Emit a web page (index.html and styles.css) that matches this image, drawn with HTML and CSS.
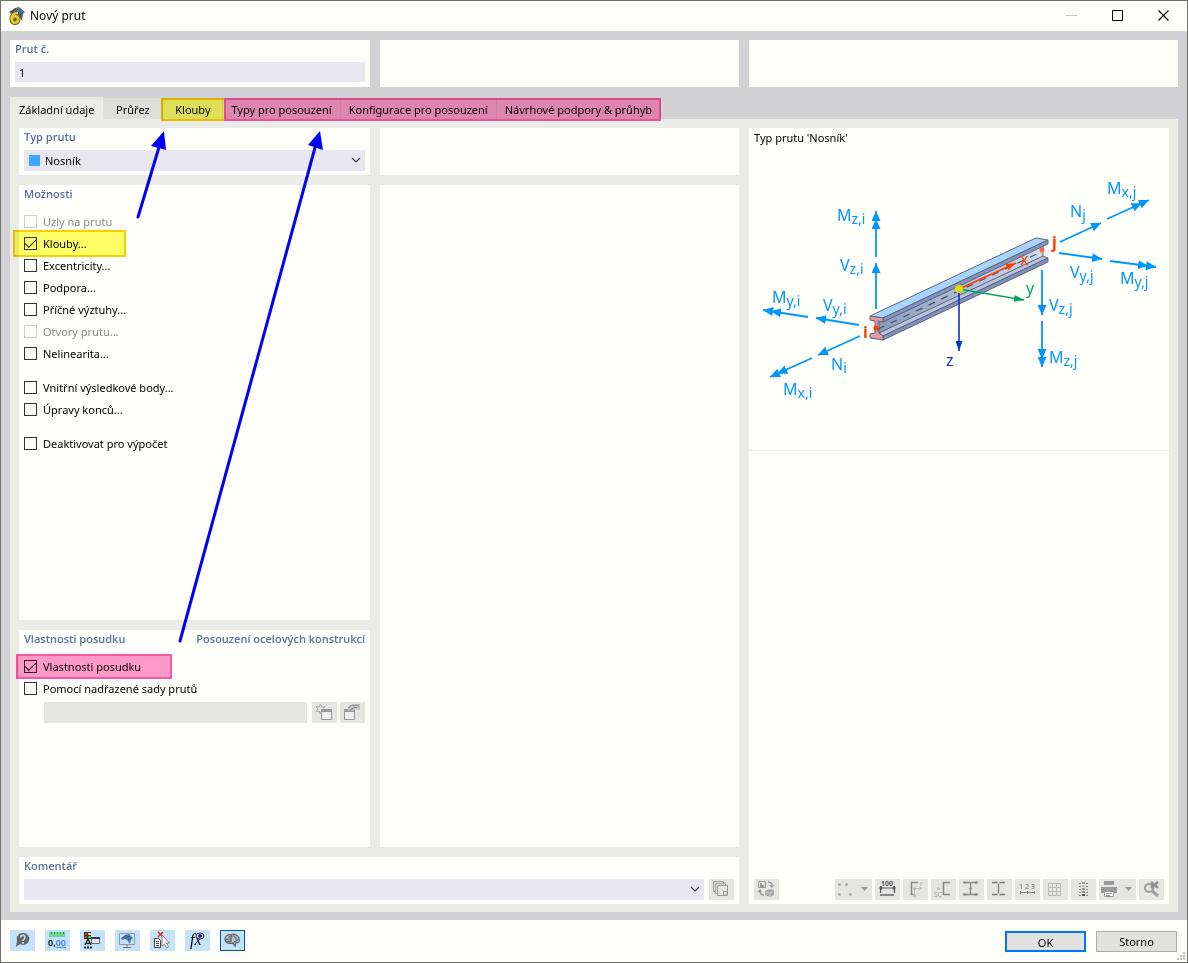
FILE: index.html
```html
<!DOCTYPE html>
<html lang="cs">
<head>
    <meta charset="UTF-8">
    <meta name="viewport" content="width=device-width, initial-scale=1.0">
    <title>Nový prut</title>
    <link rel="stylesheet" href="styles.css">
</head>
<body>
    <div class="dialog">
        <header class="titlebar">
            <svg class="app-icon" width="17" height="18" viewBox="0 0 17 18">
                <path d="M0 5l6-4 4-1 6 5-2 2-1 7-3-5-4-4-4 2z" fill="#56606e"/>
                <path d="M5 3l4-2 6 4-2 2-4-3-3 1z" fill="#4a86d0"/>
                <path d="M2 5l5-3M5 6l4-4M9 6l4-3M11 8l3-3" stroke="#3b4656" fill="none"/>
                <path d="M9 6C5.500 6 2.500 8 2.500 12" stroke="#6b6520" stroke-width="4" fill="none"/>
                <circle cx="6" cy="12.500" r="3.500" stroke="#6b6520" stroke-width="4" fill="none"/>
                <path d="M9 6C5.500 6 2.500 8 2.500 12" stroke="#e8cf2a" stroke-width="2.500" fill="none"/>
                <circle cx="6" cy="12.500" r="3.200" stroke="#e8cf2a" stroke-width="2.500" fill="#6b6520"/>
            </svg>
            <h1>Nový prut</h1>
            <div class="window-buttons">
                <button aria-label="Minimalizovat"><svg width="11" height="11" viewBox="0 0 11 11"><path d="M0 5.500h11" stroke="#c4c4c4"/></svg></button>
                <button aria-label="Maximalizovat"><svg width="11" height="11" viewBox="0 0 11 11"><path d="M.5 .5h10v10H.5z" stroke="#000" fill="none"/></svg></button>
                <button aria-label="Zavřít"><svg width="11" height="11" viewBox="0 0 11 11"><path d="M.5 .5l10 10M10.500 .5l-10 10" stroke="#000" stroke-width="1.200"/></svg></button>
            </div>
        </header>

        <main>
            <div class="top-row">
                <section class="panel">
                    <h2><label for="member-no">Prut č.</label></h2>
                    <input type="text" id="member-no" class="field" value="1">
                </section>
                <section class="panel"></section>
                <section class="panel"></section>
            </div>

            <nav class="tabs">
                <button class="tab active">Základní údaje</button>
                <button class="tab">Průřez</button>
                <button class="tab">Klouby</button>
                <button class="tab">Typy pro posouzení</button>
                <button class="tab">Konfigurace pro posouzení</button>
                <button class="tab">Návrhové podpory &amp; průhyb</button>
            </nav>

            <div class="page">
                <section class="panel area-type">
                    <h2><label for="member-type">Typ prutu</label></h2>
                    <div class="select-box with-color">
                        <span class="swatch"></span>
                        <select id="member-type"><option>Nosník</option></select>
                        <svg class="chevron" width="10" height="6" viewBox="0 0 10 6"><path d="M1 1l4 4 4-4" stroke="#444" stroke-width="1.200" fill="none"/></svg>
                    </div>
                </section>

                <section class="panel area-empty"></section>

                <section class="panel area-options">
                    <h2>Možnosti</h2>
                    <div class="checks">
                        <label class="check disabled"><input type="checkbox" disabled>Uzly na prutu</label>
                        <label class="check"><input type="checkbox" checked>Klouby...</label>
                        <label class="check"><input type="checkbox">Excentricity...</label>
                        <label class="check"><input type="checkbox">Podpora...</label>
                        <label class="check"><input type="checkbox">Příčné výztuhy...</label>
                        <label class="check disabled"><input type="checkbox" disabled>Otvory prutu...</label>
                        <label class="check"><input type="checkbox">Nelinearita...</label>
                        <label class="check new-group"><input type="checkbox">Vnitřní výsledkové body...</label>
                        <label class="check"><input type="checkbox">Úpravy konců...</label>
                        <label class="check new-group"><input type="checkbox">Deaktivovat pro výpočet</label>
                    </div>
                </section>

                <section class="panel area-middle"></section>

                <section class="panel area-design">
                    <h2>Vlastnosti posudku <span>Posouzení ocelových konstrukcí</span></h2>
                    <div class="checks">
                        <label class="check"><input type="checkbox" checked>Vlastnosti posudku</label>
                        <label class="check"><input type="checkbox">Pomocí nadřazené sady prutů</label>
                    </div>
                    <div class="set-row">
                        <input type="text" class="field" aria-label="Sada prutů" disabled>
                        <button class="icon-btn" aria-label="Nová sada prutů">
                            <svg viewBox="0 0 25 21">
                                <path d="M8.500 2l1.200 3 3.300-.5-2 2.500 2 2.500-3.300-.5-1.200 3-1.200-3-3.300.5 2-2.500-2-2.500 3.300.5z" stroke="#aaa" fill="#e5e5e4"/>
                                <path d="M9.500 7.500h10v10h-10z" fill="#eee" stroke="#999"/>
                                <path d="M9 7h11v3H9z" fill="#999"/>
                            </svg>
                        </button>
                        <button class="icon-btn" aria-label="Upravit sadu prutů">
                            <svg viewBox="0 0 25 21">
                                <path d="M4.500 7.500h10v10h-10z" fill="#eee" stroke="#999"/>
                                <path d="M4 7h11v3H4z" fill="#999"/>
                                <path d="M7 7l3-4 4-1h6v6l-3-1-4 2-2-1-3 1z" fill="#c0c0c0"/>
                                <path d="M8 6l4-3 3 1M10 8l4-2M15 3l4 1M14 5l3 1" stroke="#8c8c8c" fill="none"/>
                            </svg>
                        </button>
                    </div>
                </section>

                <section class="panel area-comment">
                    <h2><label for="comment">Komentář</label></h2>
                    <div class="comment-row">
                        <div class="select-box">
                            <select id="comment"><option></option></select>
                            <svg class="chevron" width="10" height="6" viewBox="0 0 10 6"><path d="M1 1l4 4 4-4" stroke="#444" stroke-width="1.200" fill="none"/></svg>
                        </div>
                        <button class="icon-btn" aria-label="Převzít komentář">
                            <svg viewBox="0 0 25 21">
                                <path d="M6.500 12.500h-2v-10h10v2M8.500 14.500h-2v-10h10v2" stroke="#999" fill="none"/>
                                <path d="M8.500 6.500h10v10h-10zM14.500 16.500v-4h4" fill="none" stroke="#999"/>
                                <path d="M15 16l3-3v3z" fill="#ccc"/>
                            </svg>
                        </button>
                    </div>
                </section>

                <aside class="panel area-info">
                    <p>Typ prutu 'Nosník'</p>
                    <svg class="diagram" viewBox="0 0 420 292" role="img" aria-label="Nosník">
                        <defs>
                            <linearGradient id="web" x1="0" y1="1" x2="1" y2="0">
                                <stop offset="0" stop-color="#8799ba"/>
                                <stop offset=".6" stop-color="#b3c5dc"/>
                                <stop offset="1" stop-color="#d2dfea"/>
                            </linearGradient>
                            <marker id="head" viewBox="0 0 10 9" refX="10" refY="4.500" markerWidth="10" markerHeight="9" markerUnits="userSpaceOnUse" orient="auto"><path d="M0 0l10 4.500L0 9z" fill="#0096ff"/></marker>
                            <marker id="head2" viewBox="0 0 18 9" refX="18" refY="4.500" markerWidth="18" markerHeight="9" markerUnits="userSpaceOnUse" orient="auto"><path d="M0 0l8 3.600V0l10 4.500L8 9V5.400L0 9z" fill="#0096ff"/></marker>
                            <marker id="head-x" viewBox="0 0 10 7" refX="10" refY="3.500" markerWidth="10" markerHeight="7" markerUnits="userSpaceOnUse" orient="auto"><path d="M0 0l10 3.500L0 7z" fill="#ff3c00"/></marker>
                            <marker id="head-y" viewBox="0 0 10 7" refX="10" refY="3.500" markerWidth="10" markerHeight="7" markerUnits="userSpaceOnUse" orient="auto"><path d="M0 0l10 3.500L0 7z" fill="#00a265"/></marker>
                            <marker id="head-z" viewBox="0 0 10 7" refX="10" refY="3.500" markerWidth="10" markerHeight="7" markerUnits="userSpaceOnUse" orient="auto"><path d="M0 0l10 3.500L0 7z" fill="#1032c8"/></marker>
                        </defs>

                        <!-- beam -->
                        <g stroke="#60647c" stroke-width="1" stroke-linejoin="round">
                            <path d="M130 164L294 86V100L130 176z" fill="url(#web)"/>
                            <path d="M130 175L294 98l5 2L134 178z" fill="#b5c4da"/>
                            <path d="M134 178L299 100v4L134 182z" fill="#7f92bb"/>
                            <path d="M121 158L287 80l12 2L134 160z" fill="#a6d4fb"/>
                            <path d="M134 160L299 82v4L134 164z" fill="#8294be"/>
                            <path d="M121 158l13 2v4l-5-1v11l5 4v4l-13-2v-4l5-1v-12l-5-1z" fill="#e39a9e"/>
                        </g>
                        <path d="M129 171L290 95" stroke="#4c5260" stroke-width="1.200" stroke-dasharray="7 7"/>
                        <circle cx="127" cy="170" r="2.500" fill="#ff3c00"/>
                        <circle cx="293" cy="92" r="2.500" fill="#ff6a40"/>

                        <!-- forces and moments -->
                        <g stroke="#0096ff" stroke-width="1.800">
                            <path d="M127 151V105" marker-end="url(#head)"/>
                            <path d="M110 167L67 160" marker-end="url(#head)"/>
                            <path d="M111 178L69 197" marker-end="url(#head)"/>
                            <path d="M311 84L352 65" marker-end="url(#head)"/>
                            <path d="M310 95L353 101" marker-end="url(#head)"/>
                            <path d="M293 112V157" marker-end="url(#head)"/>
                            <path d="M127 99V53" marker-end="url(#head2)"/>
                            <path d="M59 159L14 152" marker-end="url(#head2)"/>
                            <path d="M63 200L21 219" marker-end="url(#head2)"/>
                            <path d="M358 61L400 42" marker-end="url(#head2)"/>
                            <path d="M361 103L407 109" marker-end="url(#head2)"/>
                            <path d="M293 163V209" marker-end="url(#head2)"/>
                        </g>

                        <!-- local axes -->
                        <g stroke-width="1.600">
                            <path d="M210 131L267 105" stroke="#ff3c00" marker-end="url(#head-x)"/>
                            <path d="M210 131L275 142" stroke="#00a265" marker-end="url(#head-y)"/>
                            <path d="M210 131V193" stroke="#1032c8" marker-end="url(#head-z)"/>
                        </g>
                        <circle cx="210" cy="131" r="4" fill="#e0dc00"/>

                        <g class="force">
                            <text x="88" y="63">M<tspan class="sub" dy="3">z,i</tspan></text>
                            <text x="91" y="113">V<tspan class="sub" dy="3">z,i</tspan></text>
                            <text x="23" y="145">M<tspan class="sub" dy="3">y,i</tspan></text>
                            <text x="74" y="153">V<tspan class="sub" dy="3">y,i</tspan></text>
                            <text x="82" y="212">N<tspan class="sub" dy="3">i</tspan></text>
                            <text x="34" y="237">M<tspan class="sub" dy="3">x,i</tspan></text>
                            <text x="321" y="59">N<tspan class="sub" dy="3">j</tspan></text>
                            <text x="358" y="36">M<tspan class="sub" dy="3">x,j</tspan></text>
                            <text x="321" y="120">V<tspan class="sub" dy="3">y,j</tspan></text>
                            <text x="371" y="126">M<tspan class="sub" dy="3">y,j</tspan></text>
                            <text x="300" y="153">V<tspan class="sub" dy="3">z,j</tspan></text>
                            <text x="300" y="205">M<tspan class="sub" dy="3">z,j</tspan></text>
                        </g>
                        <g class="node">
                            <text x="114" y="180">i</text>
                            <text x="303" y="90">j</text>
                        </g>
                        <g class="axis">
                            <text x="271" y="107" fill="#ff3c00">x</text>
                            <text x="277" y="136" fill="#00a265">y</text>
                            <text x="197" y="208" fill="#1032c8">z</text>
                        </g>
                    </svg>
                    <div class="view-tools">
                        <button class="icon-btn first" aria-label="Přepnout zobrazení">
                            <svg viewBox="0 0 25 21">
                                <path d="M4.500 2.500h7v6h-7z" fill="none" stroke="#999"/>
                                <path d="M6 4h2v2h2v2H6z" fill="#999"/>
                                <path d="M14 3c4 0 4 2 4 4" stroke="#999" stroke-width="1.500" fill="none"/>
                                <path d="M15 6h5l-2 3z" fill="#999"/>
                                <path d="M6 12c0 3 1 4 4 4" stroke="#999" stroke-width="1.500" fill="none"/>
                                <path d="M3 13h5L6 10z" fill="#999"/>
                                <path d="M11 12l5-2 4 1v5l-4 2-5-2z" fill="#a5a5a5"/>
                                <path d="M11 13l5 1 4-2M16 14v4" stroke="#ccc" fill="none"/>
                            </svg>
                        </button>
                        <button class="icon-btn wide" aria-label="Body">
                            <svg viewBox="0 0 37 21">
                                <g fill="#aaa"><circle cx="4.500" cy="5.500" r="1.500"/><circle cx="11.500" cy="5.500" r="1.500"/><circle cx="4.500" cy="15.500" r="1.500"/><circle cx="15.500" cy="15.500" r="1.500"/></g>
                                <path d="M26 8h7l-3.500 4z" fill="#999"/>
                            </svg>
                        </button>
                        <button class="icon-btn" aria-label="Kóty">
                            <svg viewBox="0 0 25 21">
                                <text x="12" y="7" text-anchor="middle" class="tiny dark">100</text>
                                <path d="M5 9h15M5.500 7v7M19.500 7v7" stroke="#555" stroke-width="1.200"/>
                                <path d="M4 9l3-2v4zM21 9l-3-2v4z" fill="#555"/>
                                <path d="M5 15h14v2H5z" fill="#888"/>
                            </svg>
                        </button>
                        <button class="icon-btn" aria-label="Osy průřezu">
                            <svg viewBox="0 0 25 21">
                                <path d="M15 3.500H8.500v12H12" stroke="#888" stroke-width="1.500" fill="none"/>
                                <path d="M10 9.500h8M11.500 9v8M16 8l3 1.500-3 1.500M10 15l1.500 3 1.500-3" stroke="#bbb" fill="none"/>
                                <circle cx="11.500" cy="9.500" r="1.500" fill="#bbb"/>
                                <path d="M17 3l1.500 2L20 3M18.500 5L17 7" stroke="#bbb" fill="none"/>
                            </svg>
                        </button>
                        <button class="icon-btn" aria-label="Střed smyku">
                            <svg viewBox="0 0 25 21">
                                <path d="M19 3.500h-6.500v12H19" stroke="#888" stroke-width="1.500" fill="none"/>
                                <circle cx="7.500" cy="9.500" r="1.500" fill="#bbb"/>
                                <text x="3" y="18" class="tiny light">SC</text>
                            </svg>
                        </button>
                        <button class="icon-btn" aria-label="Obrys průřezu">
                            <svg viewBox="0 0 25 21">
                                <path d="M4 3.500h15M4 15.500h15M11.500 3.500v12" stroke="#888" stroke-width="1.300"/>
                                <g fill="#888"><circle cx="6" cy="3.500" r="1.200"/><circle cx="17" cy="3.500" r="1.200"/><circle cx="6" cy="15.500" r="1.200"/><circle cx="17" cy="15.500" r="1.200"/><circle cx="11.500" cy="9.500" r="1.200"/></g>
                            </svg>
                        </button>
                        <button class="icon-btn" aria-label="Části průřezu">
                            <svg viewBox="0 0 25 21">
                                <path d="M5 3.500h5.500M12.500 3.500H18M5 15.500h5.500M12.500 15.500H18M11.500 4.500v10" stroke="#777" stroke-width="1.300"/>
                            </svg>
                        </button>
                        <button class="icon-btn" aria-label="Číslování">
                            <svg viewBox="0 0 25 21">
                                <text x="4" y="10" class="tiny">1</text>
                                <text x="10" y="10" class="tiny">2</text>
                                <text x="16" y="10" class="tiny">3</text>
                                <path d="M5 13.500h15M5.500 12v3M12.500 12v3M19.500 12v3" stroke="#888"/>
                            </svg>
                        </button>
                        <button class="icon-btn" aria-label="Mřížka">
                            <svg viewBox="0 0 25 21"><path d="M5.500 4.500h12v12h-12zM9.500 4.500v12M13.500 4.500v12M5.500 8.500h12M5.500 12.500h12" stroke="#bbb" fill="none"/></svg>
                        </button>
                        <button class="icon-btn" aria-label="Rozložení hodnot">
                            <svg viewBox="0 0 25 21">
                                <path d="M8 4.500h2M8 7.500h2M8 10.500h2M8 13.500h2M8 16.500h2M15 4.500h2M15 7.500h2M15 10.500h2M15 13.500h2M15 16.500h2" stroke="#888"/>
                                <path d="M11 3h3v2h-3zM11 9h3v2h-3zM11 12h3v2h-3z" fill="#999"/>
                                <path d="M11 6h3v2h-3z" fill="#bbb"/>
                                <path d="M11 15h3v2h-3z" fill="#555"/>
                            </svg>
                        </button>
                        <button class="icon-btn wide" aria-label="Tisk">
                            <svg viewBox="0 0 37 21">
                                <path d="M5 2h10v4H5zM2 8h16v6H2z" fill="#999"/>
                                <path d="M5.500 12.500h9v5h-9z" fill="#fff" stroke="#999"/>
                                <path d="M7 14.500h6M7 16.500h4" stroke="#999"/>
                                <path d="M26 8h7l-3.500 4z" fill="#999"/>
                            </svg>
                        </button>
                        <button class="icon-btn" aria-label="Zrušit výběr">
                            <svg viewBox="0 0 25 21">
                                <circle cx="10" cy="9" r="4" stroke="#a0a0a0" stroke-width="2.200" fill="none"/>
                                <path d="M13 12l6 5" stroke="#a0a0a0" stroke-width="3"/>
                                <path d="M12 3l7 6M19 3l-7 6" stroke="#909090" stroke-width="2.500"/>
                            </svg>
                        </button>
                    </div>
                </aside>
            </div>
        </main>

        <footer>
            <button class="tool-btn" aria-label="Nápověda">
                <svg viewBox="0 0 25 21">
                    <path d="M13 3a6 6 0 1 1-3 11l-4 3 1-6a6 6 0 0 1 6-8z" fill="#666"/>
                    <path d="M10.500 7.500c0-3 4.500-3 4.500 0 0 2-2 1.500-2 3.500M13 12v2" stroke="#c4e2fa" stroke-width="1.500" fill="none"/>
                </svg>
            </button>
            <button class="tool-btn" aria-label="Jednotky a desetinná místa">
                <svg viewBox="0 0 25 21">
                    <path d="M4 2h16v5H4z" fill="#6cd48e"/>
                    <path d="M6.500 2v2M9.500 2v2M12.500 2v2M15.500 2v2M18.500 2v2" stroke="#35a060"/>
                    <text x="3" y="16" class="units">0,<tspan fill="#4a7fe8" text-decoration="underline">00</tspan></text>
                </svg>
            </button>
            <button class="tool-btn" aria-label="Zobrazení">
                <svg viewBox="0 0 25 21">
                    <path d="M4 2h7v7H4z" fill="#333"/>
                    <path d="M5 3h2v2H5z" fill="#f03030"/><path d="M8 3h3v2H8z" fill="#f0e020"/><path d="M5 6h2v2H5z" fill="#f03030"/><path d="M8 6h3v2H8z" fill="#30c040"/>
                    <path d="M5 15l3-6 3 6M6 13.500h4" stroke="#222" stroke-width="1.300" fill="none"/>
                    <path d="M4 17.500h9" stroke="#222" stroke-width="2" stroke-dasharray="2 1"/>
                    <path d="M11.500 7.500h8v6h-8z" fill="#e8e8e8" stroke="#666"/><path d="M11 7h9v2h-9z" fill="#303080"/>
                </svg>
            </button>
            <button class="tool-btn" aria-label="Grafika">
                <svg viewBox="0 0 25 21">
                    <path d="M4.500 3.500h15v11h-15z" fill="#c4e2fa" stroke="#999"/>
                    <path d="M12 15v2M8 17.500h8" stroke="#777"/>
                    <path d="M6 8l4-3 4-1 4 4-2 2-1 4-3-4-2-1-3 1z" fill="#4c7fb4"/>
                    <path d="M8 8l4-3M11 8l4-2M13 10l3-2" stroke="#2c5580" fill="none"/>
                </svg>
            </button>
            <button class="tool-btn" aria-label="Zrušit výběr objektů">
                <svg viewBox="0 0 25 21">
                    <path d="M8 2l5 5M13 2l-5 5" stroke="#f02020" stroke-width="1.500"/>
                    <path d="M4.500 8.500h4l2 2v7h-6z" fill="#fff" stroke="#444"/><path d="M6 11.500h3M6 13.500h3M6 15.500h3" stroke="#444"/>
                    <path d="M12 5v11l2.500-2 2 4 2-1-2-4h3z" fill="#fff" stroke="#888"/>
                </svg>
            </button>
            <button class="tool-btn" aria-label="Vzorce">
                <svg viewBox="0 0 25 21">
                    <text x="5" y="15" class="formula">fx</text>
                    <ellipse cx="15" cy="6" rx="4" ry="3" fill="#d8d8ee" stroke="#303070"/><circle cx="15" cy="6" r="2" fill="#303070"/>
                </svg>
            </button>
            <button class="tool-btn selected" aria-label="Asistent">
                <svg viewBox="0 0 25 21">
                    <path d="M5 9c0-3 3-5 6-4 2-2 8 0 8 4 1 3-1 4-3 4l-1 3-2-3c-4 1-8 0-8-4z" fill="#b4c4d2" stroke="#666" stroke-width="1.300"/>
                    <path d="M6 10c2-2 3 0 5-1M9 6c0 2 3 2 3 0M11 5v7M14 5c-1 3 3 2 2 5M14 12c2 0 2-2 4-2M7 12c2-2 2 0 4 0" stroke="#666" stroke-width="1.200" fill="none"/>
                </svg>
            </button>
            <div class="actions">
                <button class="push primary">OK</button>
                <button class="push">Storno</button>
            </div>
            <svg class="grip" width="8" height="8" viewBox="0 0 8 8"><path d="M6 0h2v2H6zM3 3h2v2H3zM6 3h2v2H6zM0 6h2v2H0zM3 6h2v2H3zM6 6h2v2H6z" fill="#bbb"/></svg>
        </footer>

        <!-- highlights and arrows drawn over the dialog -->
        <svg class="callouts">
            <rect x="162" y="99" width="63" height="21" fill="#ffff66" stroke="#fccc00" stroke-width="2"/>
            <rect x="225" y="99" width="435" height="21" fill="#ff99cb" stroke="#fc58a6" stroke-width="2"/>
            <rect x="14" y="231" width="111" height="25" fill="#ffff66" stroke="#fccc00" stroke-width="2"/>
            <rect x="17" y="655" width="154" height="23" fill="#ff99cb" stroke="#fc58a6" stroke-width="2"/>
            <path d="M138 217L160 144M180 641L316 144" stroke="#0000ff" stroke-width="3" stroke-linecap="round"/>
            <path d="M164 131L151 146L166 150zM320 131L308 145L323 150z" fill="#0000ff"/>
        </svg>
    </div>
</body>
</html>
```
FILE: styles.css
```css
* {
    box-sizing: border-box;
}

body {
    margin: 0;
    font-family: "Noto Sans", "Open Sans", sans-serif;
    font-size: 11px;
    line-height: 18px;
    color: #000;
}

button,
input,
select {
    font: inherit;
    color: inherit;
    margin: 0;
    padding: 0;
    border: none;
    border-radius: 0;
}

h1,
h2,
p {
    margin: 0;
    font-weight: normal;
}

.dialog {
    position: relative;
    display: flex;
    flex-direction: column;
    min-height: 100vh;
    background-color: #fefffb;
    border: 1px solid #6f6f6c;
}

/* Title bar */
.titlebar {
    display: flex;
    align-items: center;
    height: 30px;
    padding: 0 1px 0 8px;
}

.titlebar h1 {
    margin-left: 4px;
    font-size: 12px;
}

.window-buttons {
    display: flex;
    margin-left: auto;
}

.window-buttons button {
    display: flex;
    align-items: center;
    justify-content: center;
    width: 46px;
    height: 28px;
    padding-bottom: 2px;
    background: none;
}

/* Panels */
main {
    flex: 1;
    display: flex;
    flex-direction: column;
    padding: 9px 9px 8px;
    background-color: #d2d2d5;
}

.top-row {
    display: grid;
    grid-template-columns: 360fr 359fr 429fr;
    gap: 10px;
    min-height: 47px;
}

.panel {
    min-width: 0;
    padding: 0 5px;
    background-color: #fefffb;
}

.panel h2 {
    display: flex;
    justify-content: space-between;
    margin-bottom: 4px;
    font-family: "Open Sans", "Noto Sans", sans-serif;
    font-size: 11px;
    font-weight: 600;
    color: #5b7199;
}

.field {
    display: block;
    width: 100%;
    height: 20px;
    padding: 0 4px;
    background-color: #e8e6f1;
}

.select-box {
    position: relative;
    flex: 1;
}

.select-box select {
    display: block;
    appearance: none;
    width: 100%;
    height: 21px;
    padding: 0 20px 0 4px;
    background-color: #e8e6f1;
}

.with-color select {
    padding-left: 21px;
}

.swatch {
    position: absolute;
    left: 5px;
    top: 5px;
    width: 11px;
    height: 11px;
    background-color: #42a5ff;
}

.chevron {
    position: absolute;
    right: 4px;
    top: 7px;
    pointer-events: none;
}

/* Tabs */
.tabs {
    display: flex;
    align-items: flex-end;
    height: 32px;
}

.tab {
    min-width: 60px;
    height: 21px;
    padding: 2px 8px 0;
    background-color: #dededd;
    border-right: 1px solid #d2d2d5;
}

.tab.active {
    height: 22px;
    padding: 3px 9px 0;
    background-color: #ebece8;
    border-right: none;
}

.page {
    flex: 1;
    display: grid;
    grid-template-columns: 351fr 359fr 420fr;
    grid-template-rows: 47px 1fr 217px 47px;
    grid-template-areas:
        "type empty info"
        "options middle info"
        "design middle info"
        "comment comment info";
    gap: 10px;
    padding: 9px 9px 8px;
    background-color: #ebece8;
}

.area-type { grid-area: type; }
.area-empty { grid-area: empty; }
.area-options { grid-area: options; }
.area-middle { grid-area: middle; }
.area-design { grid-area: design; }
.area-comment { grid-area: comment; }

.area-info {
    grid-area: info;
    display: flex;
    flex-direction: column;
    padding: 0;
}

/* Check boxes */
.checks {
    padding-top: 4px;
}

.check {
    display: flex;
    align-items: center;
    width: max-content;
    height: 22px;
}

.check.new-group {
    margin-top: 12px;
}

.check.disabled {
    color: #8c8c8c;
}

.check input {
    appearance: none;
    display: grid;
    place-items: center;
    width: 13px;
    height: 13px;
    margin: 0 6px 1px 0;
    border: 1px solid #333;
    background-color: #fefffb;
}

.check input:disabled {
    border-color: #ccc;
}

.check input:checked::before {
    content: "";
    width: 10px;
    height: 5px;
    margin-top: -3px;
    border-left: 1px solid #222;
    border-bottom: 1px solid #222;
    transform: rotate(-45deg);
}

.set-row,
.comment-row {
    display: flex;
}

.set-row {
    gap: 3px;
    padding: 2px 0 0 20px;
}

.set-row .field {
    flex: 1;
    width: auto;
    min-width: 0;
    height: 21px;
    margin-right: 2px;
    background-color: #e5e5e4;
}

.comment-row {
    gap: 5px;
}

.icon-btn,
.tool-btn {
    flex: none;
    width: 25px;
    height: 21px;
    background-color: #e5e5e4;
}

.icon-btn.wide {
    width: 37px;
}

.icon-btn svg,
.tool-btn svg {
    display: block;
    width: 100%;
    height: 21px;
}

/* Info panel */
.area-info p {
    height: 30px;
    padding: 1px 5px;
}

.diagram {
    display: block;
    width: 100%;
}

.diagram .force {
    fill: #0096ff;
    font-size: 16px;
}

.diagram .sub {
    font-size: 14px;
}

.diagram .node {
    fill: #ff3c00;
    font-size: 16px;
    font-weight: bold;
}

.diagram .axis {
    font-size: 16px;
}

.view-tools {
    flex: 1;
    display: flex;
    align-items: flex-end;
    gap: 3px;
    padding: 4px 5px;
    border-top: 1px solid #ebece8;
}

.view-tools .first {
    margin-right: auto;
}

.tiny {
    font-size: 7px;
    font-weight: bold;
    fill: #999;
}

.tiny.dark {
    fill: #555;
}

.tiny.light {
    font-weight: normal;
    fill: #aaa;
}

/* Footer */
footer {
    position: relative;
    display: flex;
    align-items: flex-start;
    gap: 10px;
    height: 42px;
    padding: 10px 10px 0 9px;
}

.tool-btn {
    background-color: #c4e2fa;
}

.tool-btn.selected {
    outline: 1px solid #0054a6;
    outline-offset: -1px;
}

.units {
    font-size: 9px;
    font-weight: 600;
}

.formula {
    font-family: "Liberation Serif", serif;
    font-size: 16px;
    font-style: italic;
}

.actions {
    display: flex;
    gap: 10px;
    margin: 1px 0 0 auto;
}

.push {
    width: 81px;
    height: 21px;
    padding-top: 1px;
    background-color: #e1e1e0;
    border: 1px solid #adadac;
}

.push.primary {
    border: 2px solid #0078ee;
}

.grip {
    position: absolute;
    right: 2px;
    bottom: 2px;
}

.callouts {
    position: absolute;
    top: -1px;
    left: -1px;
    width: 100%;
    height: 100%;
    mix-blend-mode: multiply;
    pointer-events: none;
}
```
